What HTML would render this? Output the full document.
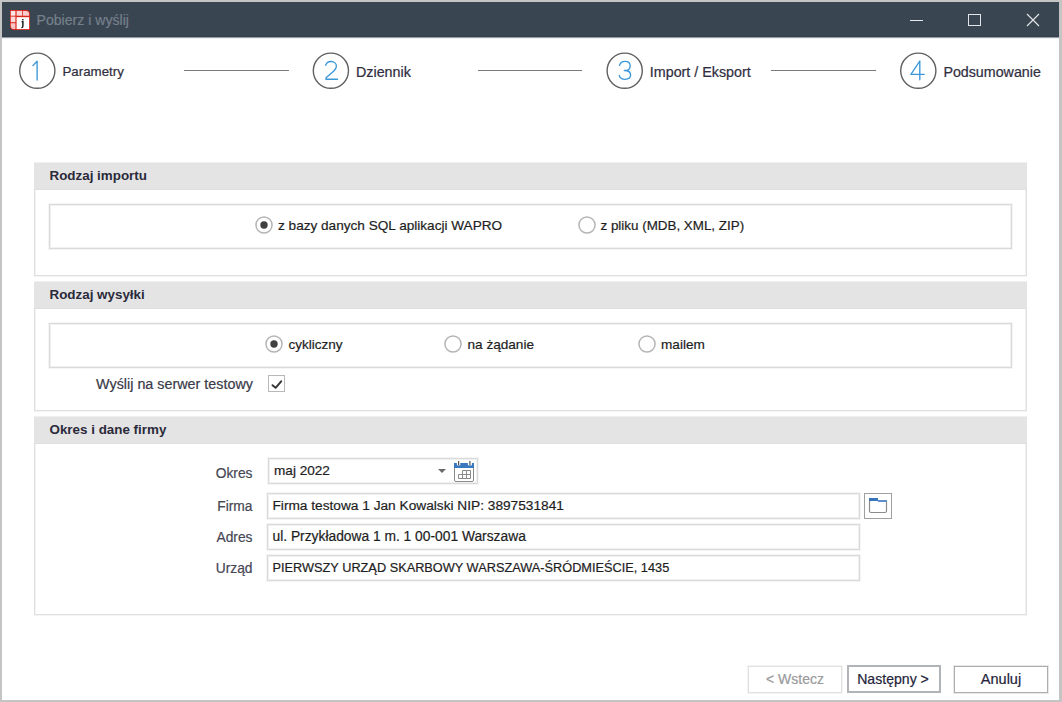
<!DOCTYPE html>
<html><head><meta charset="utf-8"><style>
html,body{margin:0;padding:0;width:1062px;height:702px;overflow:hidden;background:#c4c4c4;position:relative;font-family:"Liberation Sans", sans-serif}
.t{position:absolute;white-space:nowrap;line-height:20px;font-family:"Liberation Sans", sans-serif;-webkit-text-stroke:0.2px currentColor}
svg{display:block}
</style></head><body>
<div style="position:absolute;left:2px;top:2px;width:1057px;height:698px;box-sizing:border-box;background:#fff"></div>
<div style="position:absolute;left:2px;top:2px;width:1057px;height:35px;box-sizing:border-box;background:#3a4552"></div>
<div style="position:absolute;left:2px;top:37px;width:1057px;height:1px;box-sizing:border-box;background:#9aa0a7"></div>
<div style="position:absolute;left:2px;top:38px;width:1057px;height:1px;box-sizing:border-box;background:#eff0f1"></div>
<div style="position:absolute;left:2px;top:36px;width:1057px;height:1px;box-sizing:border-box;background:#343e4b"></div>
<svg style="position:absolute;left:9px;top:9px" width="22" height="22" viewBox="0 0 22 22">
<path d="M1,1 H17 Q21,1 21,5 V21 H5 Q1,21 1,17 Z" fill="#d9281d"/>
<rect x="1.8" y="1.9" width="4.6" height="4.8" fill="#fce6e6"/><rect x="7.6" y="1.9" width="5.6" height="4.8" fill="#fad6d6"/><path d="M14,1.9 H17 Q20.1,1.9 20.1,5 V6.7 H14 Z" fill="#f9cccc"/>
<rect x="1.8" y="7.6" width="4.6" height="5.6" fill="#fadada"/><path d="M1.8,14.2 H6.4 V20.1 H5 Q1.8,20.1 1.8,17 Z" fill="#f8c8c8"/>
<rect x="7.6" y="8.2" width="12.5" height="11.9" fill="#fff"/>
<rect x="13.1" y="10" width="1.5" height="1.4" fill="#222"/><path d="M12.6,12.6 H13.9 V16.9 Q13.9,18.6 12.4,18.6" fill="none" stroke="#111" stroke-width="1.4"/>
</svg>
<div class="t" style="left:36.5px;top:10.11px;font-size:14.1px;font-weight:normal;color:#75808b;">Pobierz i wyślij</div>
<div style="position:absolute;left:910px;top:20px;width:13px;height:1px;box-sizing:border-box;background:#e6e8ea"></div>
<div style="position:absolute;left:968px;top:14px;width:13px;height:12px;box-sizing:border-box;border:1px solid #e2e4e7"></div>
<svg style="position:absolute;left:1026px;top:13px" width="14" height="14" viewBox="0 0 14 14"><path d="M1,1 L13,13 M13,1 L1,13" stroke="#e6e8ea" stroke-width="1.1"/></svg>
<svg style="position:absolute;left:17px;top:50px" width="40" height="40" viewBox="0 0 40 40"><circle cx="20.30" cy="20.7" r="17.6" fill="#fff" stroke="#606060" stroke-width="1.4"/></svg>
<svg style="position:absolute;left:24px;top:56px" width="26" height="30" viewBox="0 0 26 30"><path d="M8.9,9.6 L13.1,5.3 L13.1,24.1" fill="none" stroke="#3b97d9" stroke-width="1.35" stroke-linecap="round" stroke-linejoin="round"/></svg>
<div class="t" style="left:62.5px;top:62.39px;font-size:13.3px;font-weight:normal;color:#302e40;-webkit-text-stroke:0.22px #302e40">Parametry</div>
<svg style="position:absolute;left:310px;top:50px" width="40" height="40" viewBox="0 0 40 40"><circle cx="20.90" cy="20.7" r="17.6" fill="#fff" stroke="#606060" stroke-width="1.4"/></svg>
<svg style="position:absolute;left:318px;top:56px" width="26" height="30" viewBox="0 0 26 30"><path d="M7.7,9.3 C8.5,6.8 10.5,5.5 13,5.5 C16.3,5.5 18.4,7.7 18.4,10.3 C18.4,12.5 17.2,13.8 15.6,15.2 L8.3,21.6 C8,21.9 7.9,22.3 7.9,22.8 L7.9,23.2 L19.5,23.2" fill="none" stroke="#3b97d9" stroke-width="1.35" stroke-linecap="round" stroke-linejoin="round"/></svg>
<div class="t" style="left:356px;top:62.05px;font-size:14.3px;font-weight:normal;color:#302e40;-webkit-text-stroke:0.22px #302e40">Dziennik</div>
<svg style="position:absolute;left:604px;top:50px" width="40" height="40" viewBox="0 0 40 40"><circle cx="20.70" cy="20.7" r="17.6" fill="#fff" stroke="#606060" stroke-width="1.4"/></svg>
<svg style="position:absolute;left:612px;top:56px" width="26" height="30" viewBox="0 0 26 30"><path d="M7.5,9.4 C8.2,6.9 10.3,5.4 13,5.4 C16.1,5.4 18.2,7.3 18.2,9.9 C18.2,12.6 16.2,14.5 12.4,14.5 C16.5,14.5 18.6,16.5 18.6,19.1 C18.6,21.6 16.3,23.3 13,23.3 C10,23.3 7.8,21.8 7.2,19.4" fill="none" stroke="#3b97d9" stroke-width="1.35" stroke-linecap="round" stroke-linejoin="round"/></svg>
<div class="t" style="left:649.8px;top:62.05px;font-size:14.3px;font-weight:normal;color:#302e40;-webkit-text-stroke:0.22px #302e40">Import / Eksport</div>
<svg style="position:absolute;left:898px;top:50px" width="40" height="40" viewBox="0 0 40 40"><circle cx="20.30" cy="20.7" r="17.6" fill="#fff" stroke="#606060" stroke-width="1.4"/></svg>
<svg style="position:absolute;left:905px;top:56px" width="26" height="30" viewBox="0 0 26 30"><path d="M14.8,23.7 L14.8,5 L5.9,18.4 L19.2,18.4" fill="none" stroke="#3b97d9" stroke-width="1.35" stroke-linecap="round" stroke-linejoin="round"/></svg>
<div class="t" style="left:943.4px;top:62.06px;font-size:14.25px;font-weight:normal;color:#302e40;-webkit-text-stroke:0.22px #302e40">Podsumowanie</div>
<div style="position:absolute;left:184px;top:70px;width:105px;height:1px;box-sizing:border-box;background:#7a7a7a"></div>
<div style="position:absolute;left:478px;top:70px;width:104px;height:1px;box-sizing:border-box;background:#7a7a7a"></div>
<div style="position:absolute;left:771px;top:70px;width:105px;height:1px;box-sizing:border-box;background:#7a7a7a"></div>
<div style="position:absolute;left:34px;top:162px;width:993px;height:1px;box-sizing:border-box;background:#f0f0f0"></div>
<div style="position:absolute;left:34px;top:163px;width:993px;height:113px;box-sizing:border-box;border:1px solid #e0e0e0;border-top:none;box-shadow:inset 1px 0 0 #f2f2f2,inset -1px 0 0 #f2f2f2,0 1px 0 #f4f4f4"></div>
<div style="position:absolute;left:34px;top:163px;width:993px;height:27px;box-sizing:border-box;background:#e4e4e4;box-shadow:inset 0 -1px 0 #dfdfdf"></div>
<div class="t" style="left:49.5px;top:166.36px;font-size:13.4px;font-weight:bold;color:#2a2a3a;-webkit-text-stroke:0">Rodzaj importu</div>
<div style="position:absolute;left:34px;top:281px;width:993px;height:1px;box-sizing:border-box;background:#f0f0f0"></div>
<div style="position:absolute;left:34px;top:282px;width:993px;height:129px;box-sizing:border-box;border:1px solid #e0e0e0;border-top:none;box-shadow:inset 1px 0 0 #f2f2f2,inset -1px 0 0 #f2f2f2,0 1px 0 #f4f4f4"></div>
<div style="position:absolute;left:34px;top:282px;width:993px;height:27px;box-sizing:border-box;background:#e4e4e4;box-shadow:inset 0 -1px 0 #dfdfdf"></div>
<div class="t" style="left:49.5px;top:285.36px;font-size:13.4px;font-weight:bold;color:#2a2a3a;-webkit-text-stroke:0">Rodzaj wysyłki</div>
<div style="position:absolute;left:34px;top:416px;width:993px;height:1px;box-sizing:border-box;background:#f0f0f0"></div>
<div style="position:absolute;left:34px;top:417px;width:993px;height:198px;box-sizing:border-box;border:1px solid #e0e0e0;border-top:none;box-shadow:inset 1px 0 0 #f2f2f2,inset -1px 0 0 #f2f2f2,0 1px 0 #f4f4f4"></div>
<div style="position:absolute;left:34px;top:417px;width:993px;height:27px;box-sizing:border-box;background:#e4e4e4;box-shadow:inset 0 -1px 0 #dfdfdf"></div>
<div class="t" style="left:49.5px;top:420.36px;font-size:13.4px;font-weight:bold;color:#2a2a3a;-webkit-text-stroke:0">Okres i dane firmy</div>
<div style="position:absolute;left:49px;top:204px;width:963px;height:45px;box-sizing:border-box;border:1px solid #dadada;outline:1px solid #f5f5f5;box-shadow:inset 0 0 0 1px #f1f1f1;"></div>
<div style="position:absolute;left:49px;top:323px;width:963px;height:45px;box-sizing:border-box;border:1px solid #dadada;outline:1px solid #f5f5f5;box-shadow:inset 0 0 0 1px #f1f1f1;"></div>
<svg style="position:absolute;left:255px;top:216px" width="18" height="18" viewBox="0 0 18 18"><circle cx="9" cy="9" r="8.05" fill="#fff" stroke="#b5b5b5" stroke-width="1.5"/><circle cx="9" cy="9" r="3.7" fill="#404040"/></svg>
<div class="t" style="left:278px;top:216.29px;font-size:13.6px;font-weight:normal;color:#1e1e1e;">z bazy danych SQL aplikacji WAPRO</div>
<svg style="position:absolute;left:577.5px;top:216px" width="18" height="18" viewBox="0 0 18 18"><circle cx="9" cy="9" r="8.05" fill="#fff" stroke="#b5b5b5" stroke-width="1.5"/></svg>
<div class="t" style="left:600.5px;top:216.36px;font-size:13.4px;font-weight:normal;color:#1e1e1e;">z pliku (MDB, XML, ZIP)</div>
<svg style="position:absolute;left:265px;top:335px" width="18" height="18" viewBox="0 0 18 18"><circle cx="9" cy="9" r="8.05" fill="#fff" stroke="#b5b5b5" stroke-width="1.5"/><circle cx="9" cy="9" r="3.7" fill="#404040"/></svg>
<div class="t" style="left:288.5px;top:334.82px;font-size:13.5px;font-weight:normal;color:#1e1e1e;">cykliczny</div>
<svg style="position:absolute;left:444px;top:335px" width="18" height="18" viewBox="0 0 18 18"><circle cx="9" cy="9" r="8.05" fill="#fff" stroke="#b5b5b5" stroke-width="1.5"/></svg>
<div class="t" style="left:467.5px;top:334.79px;font-size:13.6px;font-weight:normal;color:#1e1e1e;">na żądanie</div>
<svg style="position:absolute;left:637.7px;top:335px" width="18" height="18" viewBox="0 0 18 18"><circle cx="9" cy="9" r="8.05" fill="#fff" stroke="#b5b5b5" stroke-width="1.5"/></svg>
<div class="t" style="left:661px;top:334.79px;font-size:13.6px;font-weight:normal;color:#1e1e1e;">mailem</div>
<div class="t" style="right:809px;top:374.03px;font-size:14.35px;font-weight:normal;color:#3a3a48;">Wyślij na serwer testowy</div>
<div style="position:absolute;left:268px;top:375px;width:17px;height:17px;box-sizing:border-box;border:1px solid #b8b8b8;background:#fff"></div>
<svg style="position:absolute;left:268px;top:375px" width="18" height="18" viewBox="0 0 18 18"><path d="M4.5,10.2 L7.6,12.8 L13.2,6.3" fill="none" stroke="#333" stroke-width="1.9" stroke-linecap="round" stroke-linejoin="round"/></svg>
<div class="t" style="right:809.5px;top:464.22px;font-size:13.8px;font-weight:normal;color:#464654;">Okres</div>
<div class="t" style="right:809.5px;top:497.22px;font-size:13.8px;font-weight:normal;color:#464654;">Firma</div>
<div class="t" style="right:809.5px;top:528.22px;font-size:13.8px;font-weight:normal;color:#464654;">Adres</div>
<div class="t" style="right:809.5px;top:559.22px;font-size:13.8px;font-weight:normal;color:#464654;">Urząd</div>
<div style="position:absolute;left:268px;top:458px;width:210px;height:26px;box-sizing:border-box;border:1px solid #dadada;outline:1px solid #f5f5f5;box-shadow:inset 0 0 0 1px #f1f1f1;"></div>
<div class="t" style="left:274px;top:461.29px;font-size:13.6px;font-weight:normal;color:#1e1e1e;">maj 2022</div>
<svg style="position:absolute;left:437px;top:468px" width="10" height="6" viewBox="0 0 10 6"><path d="M1,1 H9 L5,5 Z" fill="#6a6a6a"/></svg>
<svg style="position:absolute;left:453px;top:460px" width="22" height="23" viewBox="0 0 22 23">
<rect x="1.5" y="4.5" width="19" height="17" rx="1.5" fill="#fff" stroke="#8a8a8a" stroke-width="1"/>
<rect x="1" y="3" width="20" height="5" fill="#3a78bf"/>
<rect x="3.9" y="3" width="3.4" height="2.3" fill="#fff"/><rect x="14.9" y="3" width="4" height="2.3" fill="#fff"/><rect x="5" y="1" width="1.2" height="4" fill="#555"/><rect x="16.3" y="1" width="1.2" height="4" fill="#555"/>
<path d="M9.5,10.5 H17.5 V18.5 H5.5 V14.5 H9.5 Z M9.5,14.5 H17.5 M13.5,10.5 V18.5 M9.5,14.5 V18.5" fill="none" stroke="#8a8a8a" stroke-width="1"/>
</svg>
<div style="position:absolute;left:267px;top:493px;width:593px;height:26px;box-sizing:border-box;border:1px solid #dadada;outline:1px solid #f5f5f5;box-shadow:inset 0 0 0 1px #f1f1f1;"></div>
<div class="t" style="left:272.5px;top:495.75px;font-size:13.7px;font-weight:normal;color:#1e1e1e;">Firma testowa 1 Jan Kowalski NIP: 3897531841</div>
<div style="position:absolute;left:267px;top:524px;width:593px;height:26px;box-sizing:border-box;border:1px solid #dadada;outline:1px solid #f5f5f5;box-shadow:inset 0 0 0 1px #f1f1f1;"></div>
<div class="t" style="left:272.5px;top:526.72px;font-size:13.8px;font-weight:normal;color:#1e1e1e;">ul. Przykładowa 1 m. 1 00-001 Warszawa</div>
<div style="position:absolute;left:267px;top:555px;width:593px;height:26px;box-sizing:border-box;border:1px solid #dadada;outline:1px solid #f5f5f5;box-shadow:inset 0 0 0 1px #f1f1f1;"></div>
<div class="t" style="left:272.5px;top:558.08px;font-size:12.75px;font-weight:normal;color:#1e1e1e;">PIERWSZY URZĄD SKARBOWY WARSZAWA-ŚRÓDMIEŚCIE, 1435</div>
<div style="position:absolute;left:864px;top:493px;width:28px;height:26px;box-sizing:border-box;border:1.5px solid #a0a0a0;background:#fff"></div>
<svg style="position:absolute;left:868px;top:496px" width="20" height="18" viewBox="0 0 20 18">
<rect x="1.5" y="4.5" width="17" height="12" rx="1.5" fill="#fff" stroke="#8c8c8c" stroke-width="1.2"/>
<rect x="1" y="2" width="9" height="3" fill="#3a74b9"/><rect x="10" y="4" width="9" height="2" fill="#5d8fcb"/>
</svg>
<div style="position:absolute;left:748px;top:666px;width:94px;height:27px;box-sizing:border-box;border:1px solid #e0e0e0;outline:1px solid #f4f4f4"></div>
<div class="t" style="left:595px;width:400px;text-align:center;top:669.15px;font-size:14px;font-weight:normal;color:#9a9a9a;">&lt; Wstecz</div>
<div style="position:absolute;left:847px;top:665px;width:94px;height:28px;box-sizing:border-box;border:2px solid #b0b3b8"></div>
<div class="t" style="left:693px;width:400px;text-align:center;top:669.11px;font-size:14.1px;font-weight:normal;color:#24243a;">Następny &gt;</div>
<div style="position:absolute;left:954px;top:666px;width:94px;height:27px;box-sizing:border-box;border:1px solid #adadad;outline:1px solid #e8e8e8"></div>
<div class="t" style="left:801px;width:400px;text-align:center;top:668.98px;font-size:14.5px;font-weight:normal;color:#24243a;">Anuluj</div>
</body></html>
